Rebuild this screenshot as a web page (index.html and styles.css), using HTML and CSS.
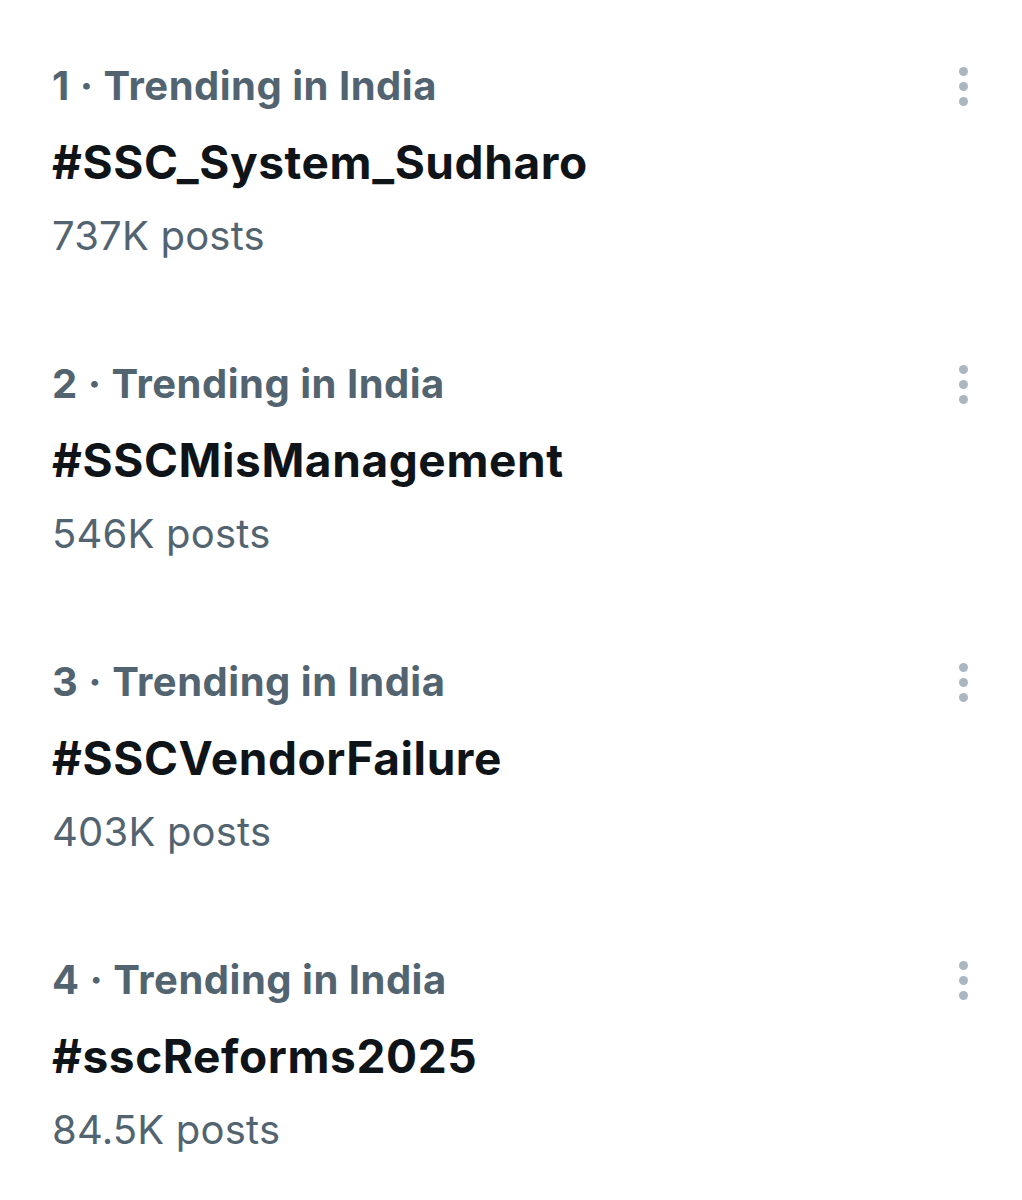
FILE: index.html
```html
<!DOCTYPE html>
<html lang="en">
<head>
  <meta charset="UTF-8">
  <meta name="viewport" content="width=device-width, initial-scale=1.0">
  <title>Trending</title>
  <link rel="stylesheet" href="styles.css">
</head>
<body>

  <div class="trends">

    <div class="trend">
      <div class="trend-text">
        <div class="trend-meta">1 · Trending in India</div>
        <div class="trend-name">#SSC_System_Sudharo</div>
        <div class="trend-count">737K posts</div>
      </div>
      <div class="more"><span></span><span></span><span></span></div>
    </div>

    <div class="trend">
      <div class="trend-text">
        <div class="trend-meta">2 · Trending in India</div>
        <div class="trend-name">#SSCMisManagement</div>
        <div class="trend-count">546K posts</div>
      </div>
      <div class="more"><span></span><span></span><span></span></div>
    </div>

    <div class="trend">
      <div class="trend-text">
        <div class="trend-meta">3 · Trending in India</div>
        <div class="trend-name">#SSCVendorFailure</div>
        <div class="trend-count">403K posts</div>
      </div>
      <div class="more"><span></span><span></span><span></span></div>
    </div>

    <div class="trend">
      <div class="trend-text">
        <div class="trend-meta">4 · Trending in India</div>
        <div class="trend-name">#sscReforms2025</div>
        <div class="trend-count">84.5K posts</div>
      </div>
      <div class="more"><span></span><span></span><span></span></div>
    </div>

  </div>

</body>
</html>
```

FILE: styles.css
```css
body {
  margin: 0;
  background-color: #ffffff;
  font-family: Inter, "Noto Sans", sans-serif;
}

.trends {
  padding: 48px 48px 0 52px;
  display: flex;
  flex-direction: column;
  gap: 70px;
}

.trend {
  display: flex;
  justify-content: space-between;
  align-items: flex-start;
}

.trend-text > div {
  height: 76px;
  line-height: 76px;
  white-space: nowrap;
}

.trend-meta {
  font-size: 40px;
  font-weight: 700;
  letter-spacing: 0.5px;
  color: #536471; /* X secondary grey */
}

.trend-name {
  font-size: 46px;
  font-weight: 700;
  letter-spacing: 0.6px;
  color: #0f1419;
}

.trend-count {
  font-size: 40px;
  letter-spacing: 0.2px;
  color: #536471;
  position: relative;
  top: -2px;
}

/* three dot "more" button */
.more {
  display: flex;
  flex-direction: column;
  align-items: center;
  gap: 6px;
  margin-top: 19px;
  margin-right: 6px;
}

.more span {
  width: 9px;
  height: 9px;
  border-radius: 50%;
  background-color: #aab6c0;
}
```
